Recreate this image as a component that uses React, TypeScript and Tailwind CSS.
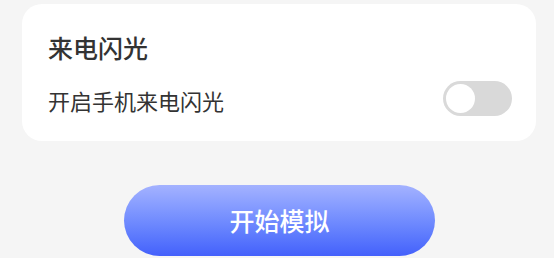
export default function App() {
  return (
    <div
      className="h-[258px] w-[554px] overflow-hidden bg-[#f5f5f5] pt-[4px]"
      style={{ fontFamily: '"Noto Sans CJK SC", "Noto Sans", sans-serif' }}
    >
      <div className="ml-[22px] flex h-[137px] w-[514px] flex-col rounded-[20px] bg-white pl-[26px] pr-[24px] pt-[26px]">
        <h3 className="text-[25px] font-medium leading-[34px] text-[#333333]">来电闪光</h3>
        <div className="mt-[17px] flex items-center justify-between">
          <span className="pt-[3px] text-[22px] leading-[32px] text-[#333333]">开启手机来电闪光</span>
          <button
            type="button"
            aria-label="开启手机来电闪光"
            className="flex h-[35px] w-[69px] items-center rounded-full bg-[#d9d9d9] px-[3px]"
          >
            <span className="h-[29px] w-[29px] rounded-full bg-white" />
          </button>
        </div>
      </div>
      <div className="mt-[44px] pl-[124px]">
        <button
          type="button"
          className="flex h-[71px] w-[311px] items-center justify-center rounded-full bg-gradient-to-b from-[#a4b2ff] to-[#4460fb] text-[25px] font-medium text-white"
        >
          开始模拟
        </button>
      </div>
    </div>
  );
}
